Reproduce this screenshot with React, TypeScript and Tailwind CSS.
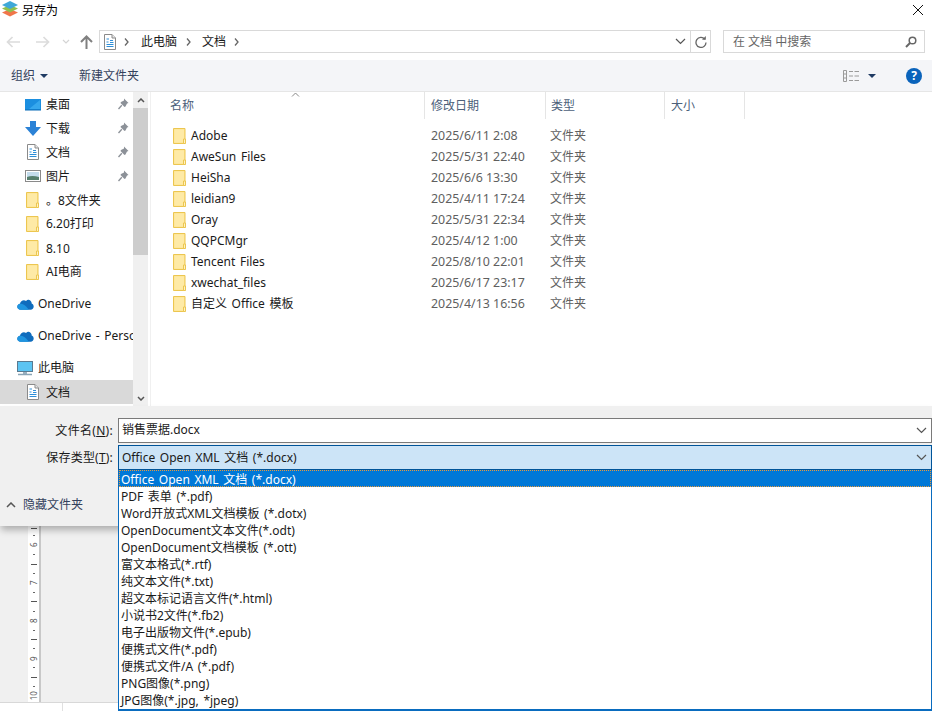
import React from "react";

const font = "font-['Noto_Sans','Noto_Sans_CJK_SC',sans-serif]";
const body = "text-[12px] [word-spacing:1.500px]";

function Logo() {
  return (
    <svg width="18" height="18" viewBox="0 0 18 18" className="shrink-0">
      <path d="M1 12.500 9 9l8 3.500L9 16.500z" fill="#f0764a" />
      <path d="M1 8.500 9 5l8 3.500L9 12.500z" fill="#8fc04f" />
      <path d="M1 5 9 1l8 4-8 4z" fill="#3fa8d8" />
    </svg>
  );
}

function DocIcon({ size = 16 }: { size?: number }) {
  return (
    <svg width={size - 4} height={size} viewBox="0 0 12 16">
      <path d="M.5.500h7.500l3.500 3.500v11.500H.5z" fill="#fff" stroke="#8a8a8a" />
      <path d="M8 .5V4h3.500" fill="#e8e8e8" stroke="#8a8a8a" />
      <path d="M2.500 5H5M6 6.500h3M2.500 8h2M6 8.500h3.500M2.500 10.500h7M2.500 12.500h7" stroke="#2f8fd8" strokeWidth="1" />
    </svg>
  );
}

function Folder({ h = 16 }: { h?: number }) {
  const w = Math.round((h * 13) / 16);
  return (
    <svg width={w} height={h} viewBox="0 0 13 16" className="shrink-0">
      <path d="M.5.500h11.500v15H.5z" fill="#fde48f" stroke="#ecc650" />
      <path d="M1.500 1.500h9.500v13H1.500z" fill="#feeaa6" />
      <path d="M10.500 11h2v4.500h-2z" fill="#fff2c2" stroke="#ecc650" />
    </svg>
  );
}

function Pin() {
  return (
    <svg width="11" height="12" viewBox="0 0 11 12" className="shrink-0">
      <path d="M6 .5 10.500 5 9 5.500 7.500 8.500 6.500 9 2.500 5 3 4l3-1.500z" fill="#8c9198" />
      <path d="M3.800 7.200.5 11" stroke="#8c9198" strokeWidth="1.300" />
    </svg>
  );
}

function Cloud() {
  return (
    <svg width="17" height="12" viewBox="0 0 16 11">
      <path d="M3.500 10.800C1.500 10.800.3 9.500.3 8c0-1.500 1.100-2.600 2.500-2.700C3.200 3.300 4.800 2 6.500 2c.7 0 1.400.2 2 .6C9.300 1.600 10.400 1.200 11 1.500c1.800.4 2.900 2 2.800 3.500 1.100.3 1.900 1.400 1.900 2.800 0 1.600-1.200 3-2.900 3z" fill="#0f6cbd" />
      <path d="M3.500 10.800C1.500 10.800.3 9.500.3 8c0-1 .8-2.300 2.500-2.700 2-.3 4 .9 5.500 2.300l3 3.200z" fill="#1f95e0" />
    </svg>
  );
}

function NavRow({ icon, label, pin, selected, indent = 27, top = 0, latin }: { icon: React.ReactNode; label: string; pin?: boolean; selected?: boolean; indent?: number; top?: number; latin?: boolean }) {
  return (
    <div className={`h-6 flex items-center whitespace-nowrap overflow-hidden ${selected ? "bg-[#d9d9d9]" : ""} ${top === 8 ? "mt-2" : ""}`}>
      <div className={`flex justify-center shrink-0 ${indent === 27 ? "w-[46px] pl-[19px]" : "w-[38px] pl-[12px]"}`}>{icon}</div>
      <span className={`${body} ${latin ? "" : "pt-[1px]"} text-[#1a1a1a] flex-1`}>{label}</span>
      {pin && <span className="pr-[4px]"><Pin /></span>}
    </div>
  );
}

const files = [
  ["Adobe", "2025/6/11 2:08"],
  ["AweSun Files", "2025/5/31 22:40"],
  ["HeiSha", "2025/6/6 13:30"],
  ["leidian9", "2025/4/11 17:24"],
  ["Oray", "2025/5/31 22:34"],
  ["QQPCMgr", "2025/4/12 1:00"],
  ["Tencent Files", "2025/8/10 22:01"],
  ["xwechat_files", "2025/6/17 23:17"],
  ["自定义 Office 模板", "2025/4/13 16:56"],
];

const options = [
  "PDF 表单 (*.pdf)",
  "Word开放式XML文档模板 (*.dotx)",
  "OpenDocument文本文件(*.odt)",
  "OpenDocument文档模板 (*.ott)",
  "富文本格式(*.rtf)",
  "纯文本文件(*.txt)",
  "超文本标记语言文件(*.html)",
  "小说书2文件(*.fb2)",
  "电子出版物文件(*.epub)",
  "便携式文件(*.pdf)",
  "便携式文件/A (*.pdf)",
  "PNG图像(*.png)",
  "JPG图像(*.jpg, *jpeg)",
];

function Chevron() {
  return (
    <svg width="11" height="7" viewBox="0 0 11 7"><path d="M1 1l4.500 4.500L10 1" fill="none" stroke="#555" strokeWidth="1.200" /></svg>
  );
}

function Crumb() {
  return (
    <svg width="5" height="8" viewBox="0 0 5 8" className="shrink-0"><path d="M1 .5 4 4 1 7.500" fill="none" stroke="#666" strokeWidth="1.300" /></svg>
  );
}

function Tick() {
  return <div className="h-[9.450px] flex items-center"><div className="h-px w-[6px] bg-[#555]" /></div>;
}
function Dot() {
  return <div className="h-[9.450px] flex items-center"><div className="h-px w-[2px] bg-[#666]" /></div>;
}

function Ruler() {
  const labels = ["6", "7", "8", "9", "10"];
  return (
    <div className="w-[13px] bg-white border-r-2 border-[#c8c8c8] flex flex-col items-center text-[#555] overflow-hidden">
      <div className="h-[5px] flex items-center"><div className="h-px w-[6px] bg-[#555]" /></div>
      {labels.map((l, i) => (
        <React.Fragment key={l}>
          <Dot />
          <div className="h-[9.450px] flex items-center justify-center text-[8px] leading-none -rotate-90">{l}</div>
          {i < 4 && <Dot />}
          {i < 4 && <Tick />}
        </React.Fragment>
      ))}
    </div>
  );
}

export default function App() {
  return (
    <div className={`relative w-[932px] h-[711px] overflow-hidden bg-white flex flex-col ${font}`}>
      {/* title */}
      <div className="h-[18px] flex items-center pl-[1px] shrink-0">
        <Logo />
        <span className="ml-[3px] pt-[3px] text-[12px] text-black leading-[18px]">另存为</span>
        <div className="ml-auto mr-[8px] pt-[2px]">
          <svg width="12" height="12" viewBox="0 0 12 12"><path d="M1 1l10 10M11 1 1 11" stroke="#111" strokeWidth="1" /></svg>
        </div>
      </div>

      {/* nav */}
      <div className="h-[42px] shrink-0 flex items-center pl-[6px] pr-[7px] pt-[5px]">
        <svg width="15" height="12" viewBox="0 0 15 12"><path d="M14 6H2M6.500 1 1.500 6l5 5" fill="none" stroke="#dcdcdc" strokeWidth="1.700" /></svg>
        <svg width="15" height="12" viewBox="0 0 15 12" className="ml-[14px]"><path d="M1 6h12M8.500 1l5 5-5 5" fill="none" stroke="#dcdcdc" strokeWidth="1.700" /></svg>
        <svg width="8" height="5" viewBox="0 0 8 5" className="ml-[12px]"><path d="M1 1l3 3 3-3" fill="none" stroke="#d4d4d4" strokeWidth="1.200" /></svg>
        <svg width="13" height="14" viewBox="0 0 13 14" className="ml-[10px]"><path d="M6.500 14V2M1 7l5.500-5.500L12 7" fill="none" stroke="#808080" strokeWidth="2" /></svg>
        <div className="ml-[6px] h-[23px] w-[612px] border border-[#d9d9d9] flex items-center">
          <div className="pl-[4px] flex items-center"><DocIcon size={16} /></div>
          <div className="ml-[8px]"><Crumb /></div>
          <span className="ml-[12px] text-[12px] text-[#1a1a1a]">此电脑</span>
          <div className="ml-[9px]"><Crumb /></div>
          <span className="ml-[11px] text-[12px] text-[#1a1a1a]">文档</span>
          <div className="ml-[8px]"><Crumb /></div>
          <div className="ml-auto mr-[4px]"><Chevron /></div>
          <div className="w-[20px] h-full border-l border-[#d9d9d9] flex items-center justify-center">
            <svg width="12" height="12" viewBox="0 0 12 12"><path d="M9.800 3.200A5 5 0 1 0 11 6.500" fill="none" stroke="#666" strokeWidth="1.300" /><path d="M7 3.800h3.800V0z" fill="#666" /></svg>
          </div>
        </div>
        <div className="ml-[12px] h-[23px] flex-1 border border-[#d9d9d9] flex items-center pl-[9px] pr-[7px]">
          <span className="text-[12px] text-[#666]">在 文档 中搜索</span>
          <svg width="12" height="12" viewBox="0 0 12 12" className="ml-auto"><circle cx="7.500" cy="4.500" r="3.300" fill="none" stroke="#666" strokeWidth="1.500" /><path d="M5 7 1 11" stroke="#666" strokeWidth="2" /></svg>
        </div>
      </div>

      {/* toolbar */}
      <div className="h-[32px] shrink-0 bg-[#f4f5f8] border-b border-[#e6e6e6] flex items-center pl-[11px] pr-[10px]">
        <span className="text-[12px] text-[#33415c]">组织</span>
        <svg width="8" height="4" viewBox="0 0 8 4" className="ml-[5px]"><path d="M0 0h8L4 4z" fill="#1f3a63" /></svg>
        <span className="ml-[31px] text-[12px] text-[#33415c]">新建文件夹</span>
        <svg width="16" height="12" viewBox="0 0 16 12" className="ml-auto"><path d="M.5.500h3v11h-3zM.5 4h3M.5 8h3M6 1.500h4M11.500 1.500H16M6 6h4M11.500 6H16M6 10.500h4M11.500 10.500H16" fill="none" stroke="#9a9a9a" /></svg>
        <svg width="8" height="4" viewBox="0 0 8 4" className="ml-[9px]"><path d="M0 0h8L4 4z" fill="#1f3a63" /></svg>
        <div className="ml-[30px] w-4 h-4 rounded-full bg-[#0a63bb] flex items-center justify-center text-white text-[12px] font-bold leading-none">?</div>
      </div>

      {/* body */}
      <div className="h-[314px] shrink-0 flex">
        <div className="w-[133px] shrink-0 overflow-hidden">
          <NavRow label="桌面" pin icon={<svg width="16" height="13" viewBox="0 0 16 13"><rect width="16" height="11" y="1" fill="#1b8fe0" /><path d="M0 12h16" stroke="#0a6cb8" /><path d="M4 11 15 2v9z" fill="#36a8ee" /></svg>} />
          <NavRow label="下载" pin icon={<svg width="16" height="15" viewBox="0 0 16 15"><path d="M5 0h6v6h5l-8 9-8-9h5z" fill="#2b82d6" /></svg>} />
          <NavRow label="文档" pin icon={<DocIcon size={16} />} />
          <NavRow label="图片" pin icon={<svg width="16" height="12" viewBox="0 0 16 12"><rect x=".5" y=".5" width="15" height="11" fill="#fff" stroke="#8a8a8a" /><rect x="2" y="2" width="12" height="8" fill="#c3dcec" /><path d="M2 7q5-2 12 0v3H2z" fill="#567f6d" /></svg>} />
          <NavRow label="。8文件夹" icon={<Folder h={16} />} />
          <NavRow label="6.20打印" latin icon={<Folder h={16} />} />
          <NavRow label="8.10" icon={<Folder h={16} />} />
          <NavRow label="AI电商" latin icon={<Folder h={16} />} />
          <NavRow label="OneDrive" latin top={8} indent={19} icon={<Cloud />} />
          <NavRow label="OneDrive - Personal" latin top={8} indent={19} icon={<Cloud />} />
          <NavRow label="此电脑" latin top={8} indent={19} icon={<svg width="16" height="15" viewBox="0 0 16 15"><rect x=".5" y=".5" width="15" height="10" fill="#5cc4f2" stroke="#5a7a90" /><path d="M6 11h4v2H6z" fill="#9ab0c0" /><path d="M1 13.500h14" stroke="#8aa4b6" strokeWidth="1.500" /></svg>} />
          <NavRow label="文档" selected icon={<DocIcon size={16} />} />
        </div>
        <div className="w-[15px] shrink-0 flex flex-col bg-[#f0f0f0]">
          <div className="h-[16px] flex items-center justify-center">
            <svg width="8" height="5" viewBox="0 0 8 5"><path d="M1 4l3-3 3 3" fill="none" stroke="#555" strokeWidth="1.500" /></svg>
          </div>
          <div className="h-[147px] bg-[#cdcdcd]" />
          <div className="flex-1" />
          <div className="h-[16px] flex items-center justify-center">
            <svg width="8" height="5" viewBox="0 0 8 5"><path d="M1 1l3 3 3-3" fill="none" stroke="#555" strokeWidth="1.500" /></svg>
          </div>
        </div>
        <div className="w-[3px] shrink-0 border-r border-[#f0f0f0]" />
        <div className="flex-1 min-w-0 relative">
          <div className="h-[28px] flex text-[12px] text-[#4c607a]">
            <div className="w-[274px] pl-[19px] pt-[1px] border-r border-[#e5e5e5] flex items-center h-[27px]">名称</div>
            <div className="w-[121px] pl-[6px] pt-[1px] border-r border-[#e5e5e5] flex items-center h-[27px]">修改日期</div>
            <div className="w-[119px] pl-[5px] pt-[1px] border-r border-[#e5e5e5] flex items-center h-[27px]">类型</div>
            <div className="w-[80px] pl-[6px] pt-[1px] border-r border-[#e5e5e5] flex items-center h-[27px]">大小</div>
          </div>
          <svg width="9" height="5" viewBox="0 0 9 5" className="absolute left-[140px] top-[0px]"><path d="M1 4.500 4.500 1 8 4.500" fill="none" stroke="#888" /></svg>
          <div className="pt-[5px]">
            {files.map(([n, d]) => (
              <div key={n} className="h-[21px] flex items-center whitespace-nowrap">
                <div className="w-[274px] pl-[22px] flex items-center">
                  <Folder h={16} />
                  <span className={`ml-[5px] pt-[1px] ${body} text-[#1a1a1a]`}>{n}</span>
                </div>
                <div className="w-[119px] pl-[6px] pt-[1px] text-[12.400px] text-[#5f5f5f]">{d}</div>
                <div className="pl-[6px] pt-[1px] text-[12px] text-[#5f5f5f]">文件夹</div>
              </div>
            ))}
          </div>
        </div>
      </div>

      {/* bottom panel */}
      <div className="h-[120px] shrink-0 bg-[#f0f0f0] shadow-[0_5px_7px_-1px_rgba(0,0,0,0.28)] z-10 relative">
        <div className="pt-[12px] flex items-center h-[36px]">
          <div className="w-[118px] pr-[5px] pt-[1px] text-right text-[12px] tracking-[0.300px] text-[#1a1a1a] whitespace-nowrap">文件名(<u>N</u>):</div>
          <div className="flex-1 h-[25px] bg-white border border-[#7a7a7a] flex items-center pl-[3px] pr-[4px]">
            <span className={`${body} text-[#1a1a1a]`}>销售票据.docx</span>
            <div className="ml-auto"><Chevron /></div>
          </div>
        </div>
        <div className="mt-[3px] flex items-center h-[25px]">
          <div className="w-[118px] pr-[5px] pt-[1px] text-right text-[12px] tracking-[0.200px] text-[#1a1a1a] whitespace-nowrap">保存类型(<u>T</u>):</div>
          <div className="flex-1 h-[25px] bg-[#cce4f7] border border-[#005499] flex items-center pl-[3px] pr-[4px]">
            <span className={`${body} text-[#1a1a1a]`}>Office Open XML 文档 (*.docx)</span>
            <div className="ml-auto"><Chevron /></div>
          </div>
        </div>
        <div className="mt-[26px] flex items-center pl-[6px]">
          <svg width="10" height="6" viewBox="0 0 10 6"><path d="M1 5l4-4 4 4" fill="none" stroke="#555" strokeWidth="1.500" /></svg>
          <span className="ml-[7px] text-[12px] text-[#33415c]">隐藏文件夹</span>
        </div>
      </div>

      {/* document behind */}
      <div className="h-[176px] shrink-0 bg-[#f0f0f0] flex pl-[28px] overflow-hidden">
        <Ruler />
      </div>
      <div className="flex-1 bg-white border-t border-[#d8d8d8] flex items-end">
        <div className="w-[63px] h-full border-r border-[#e0e0e0]" />
        <div className="ml-[810px] w-[7px] h-[3px] bg-[#555]" />
        <div className="ml-[13px] w-[24px] h-[1px] bg-[#e0e0e0]" />
      </div>

      {/* dropdown */}
      <div className="absolute left-[118px] top-[470px] w-[814px] h-[241px] bg-white border-x border-b-2 border-[#0a6cbf] z-20">
        <div className={`h-[17px] bg-[#0078d7] border border-dotted border-[#e89a3c] text-white ${body} leading-[17px] pl-[1px] whitespace-nowrap`}>Office Open XML 文档 (*.docx)</div>
        {options.map((o) => (
          <div key={o} className={`h-[17px] ${body} leading-[19px] pl-[2px] text-[#1a1a1a] whitespace-nowrap`}>{o}</div>
        ))}
      </div>
    </div>
  );
}
